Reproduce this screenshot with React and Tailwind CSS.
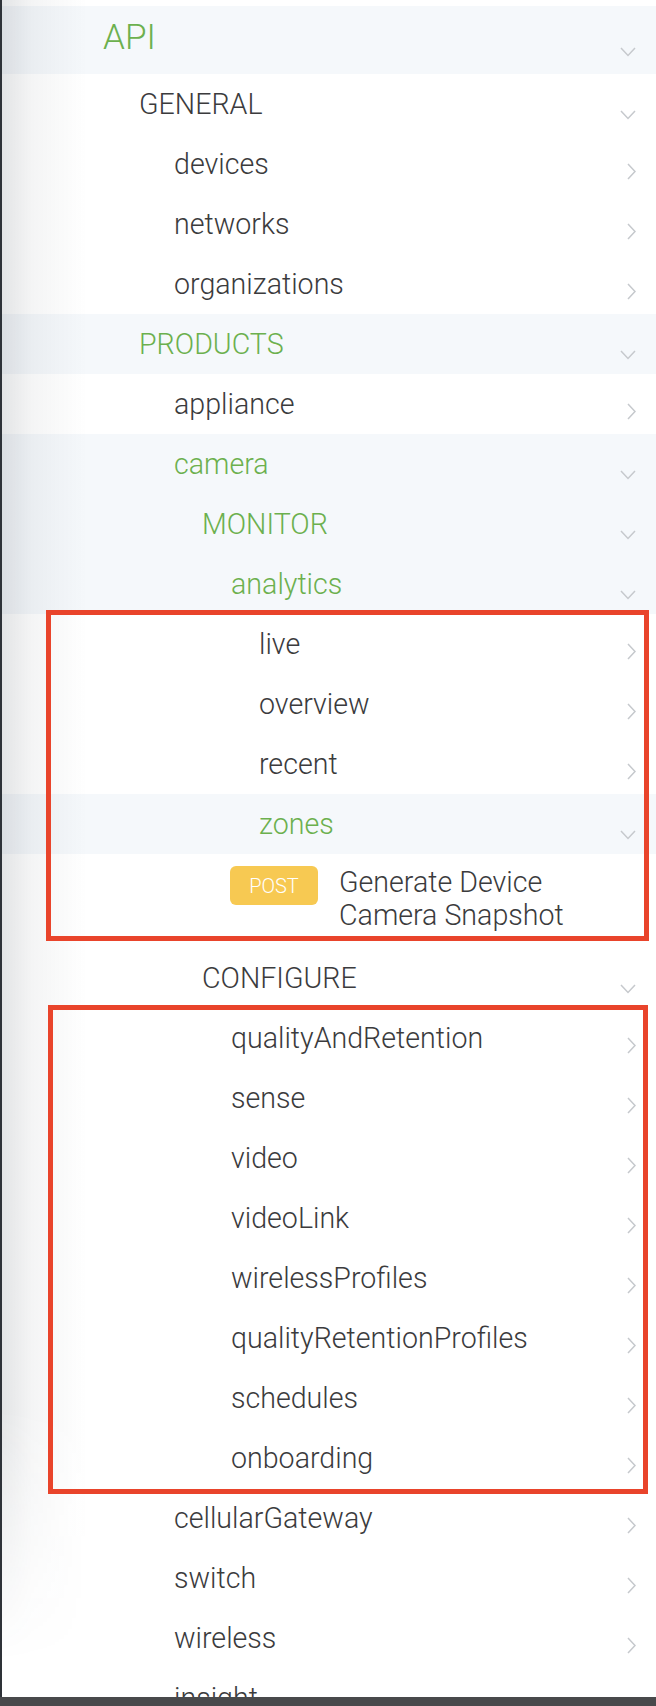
import React from 'react'

const GREEN = 'text-[#6cb04e]'
const DARK = 'text-[#3b3b3d]'

const ChevronDown = () => (
  <svg width="16" height="10" viewBox="0 0 16 10" fill="none" className="shrink-0">
    <path d="M1 1 L8 8.5 L15 1" stroke="#c6c9cd" strokeWidth="1.5" />
  </svg>
)

const ChevronRight = () => (
  <svg width="9" height="17" viewBox="0 0 9 17" fill="none" className="shrink-0">
    <path d="M1 1 L8 8.5 L1 16" stroke="#c6c9cd" strokeWidth="1.5" />
  </svg>
)

const indents = {
  1: 'pl-[137px]',
  2: 'pl-[172px]',
  3: 'pl-[200px]',
  4: 'pl-[229px]',
  5: 'pl-[257px]',
}

const Row = ({ label, level, open, active, band }) => (
  <div className={`flex h-[60px] shrink-0 pr-[20px] ${band ? 'bg-[#f5f8fb]' : 'bg-white'}`}>
    <div className={`flex-1 text-[28.6px] font-light leading-[60px] whitespace-nowrap ${indents[level]} ${active ? GREEN : DARK}`}>
      {label}
    </div>
    {open ? (
      <div className="mt-[36px]"><ChevronDown /></div>
    ) : (
      <div className="mt-[29px]"><ChevronRight /></div>
    )}
  </div>
)

const App = () => {
  return (
    <div className="w-[656px] h-[1706px] bg-white overflow-hidden" style={{ fontFamily: 'Roboto, "Liberation Sans", sans-serif' }}>
      <div className="relative h-[1697px] overflow-hidden border-l-2 border-[#2e3238]">
        <div className="h-[6px] bg-white" />

        <div className="flex h-[68px] pr-[20px] bg-[#f5f8fb]">
          <div className={`flex-1 pl-[101px] text-[35px] font-light leading-[64px] ${GREEN}`}>API</div>
          <div className="mt-[41px]"><ChevronDown /></div>
        </div>

        <Row label="GENERAL" level={1} open />
        <Row label="devices" level={2} />
        <Row label="networks" level={2} />
        <Row label="organizations" level={2} />
        <Row label="PRODUCTS" level={1} open active band />
        <Row label="appliance" level={2} />
        <Row label="camera" level={2} open active band />
        <Row label="MONITOR" level={3} open active band />
        <Row label="analytics" level={4} open active band />
        <Row label="live" level={5} />
        <Row label="overview" level={5} />
        <Row label="recent" level={5} />
        <Row label="zones" level={5} open active band />

        <div className="flex h-[94px] pl-[228px] pt-[12px]">
          <div className="flex h-[39px] w-[88px] items-center justify-center rounded-[6px] bg-[#f7c952] text-[20px] font-light text-white">
            POST
          </div>
          <div className={`ml-[21px] w-[260px] text-[28.6px] font-light leading-[33px] ${DARK}`}>
            Generate Device Camera Snapshot
          </div>
        </div>

        <Row label="CONFIGURE" level={3} open />
        <Row label="qualityAndRetention" level={4} />
        <Row label="sense" level={4} />
        <Row label="video" level={4} />
        <Row label="videoLink" level={4} />
        <Row label="wirelessProfiles" level={4} />
        <Row label="qualityRetentionProfiles" level={4} />
        <Row label="schedules" level={4} />
        <Row label="onboarding" level={4} />
        <Row label="cellularGateway" level={2} />
        <Row label="switch" level={2} />
        <Row label="wireless" level={2} />
        <Row label="insight" level={2} />

        {/* left panel shadow */}
        <div className="pointer-events-none absolute left-0 top-0 h-[1660px] w-[90px] bg-[linear-gradient(to_right,rgba(40,50,60,0.13),rgba(40,50,60,0.05)_30px,transparent_85px)] [mask-image:linear-gradient(to_bottom,black_85%,transparent_100%)]" />

        {/* annotation boxes */}
        <div className="pointer-events-none absolute left-[44px] top-[610px] h-[331px] w-[603px] border-[5px] border-[#e9442b]" />
        <div className="pointer-events-none absolute left-[46px] top-[1005px] h-[489px] w-[600px] border-[5px] border-[#e9442b]" />
      </div>
      <div className="h-[9px] bg-[#48494b]" />
    </div>
  )
}

export default App
